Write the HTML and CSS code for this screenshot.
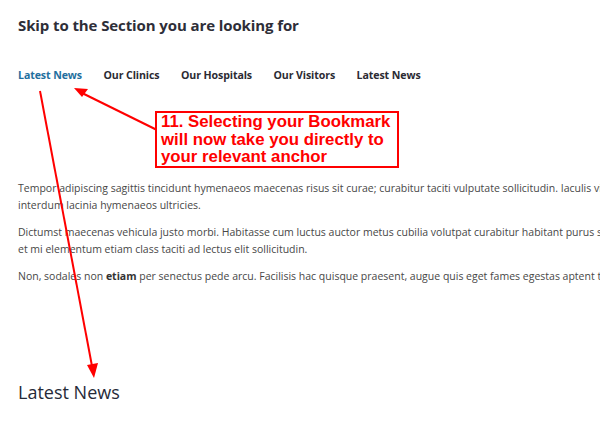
FILE: index.html
```html
<!DOCTYPE html>
<html>
<head>
<meta charset="utf-8">
<link rel="stylesheet" href="styles.css">
</head>
<body>
<div class="page">
  <h2 class="skip-title">Skip to the Section you are looking for</h2>
  <nav class="anchors">
    <a class="anchor active" href="#news">Latest News</a>
    <a class="anchor" href="#clinics">Our Clinics</a>
    <a class="anchor" href="#hospitals">Our Hospitals</a>
    <a class="anchor" href="#visitors">Our Visitors</a>
    <a class="anchor" href="#news">Latest News</a>
  </nav>
  <div class="content">
    <p>Tempor adipiscing sagittis tincidunt hymenaeos maecenas risus sit curae; curabitur taciti vulputate sollicitudin. Iaculis vitae nisl<br>interdum lacinia hymenaeos ultricies.</p>
    <p>Dictumst maecenas vehicula justo morbi. Habitasse cum luctus auctor metus cubilia volutpat curabitur habitant purus sociis<br>et mi elementum etiam class taciti ad lectus elit sollicitudin.</p>
    <p>Non, sodales non <strong>etiam</strong> per senectus pede arcu. Facilisis hac quisque praesent, augue quis eget fames egestas aptent taciti.</p>
  </div>
  <h2 class="section-title" id="news">Latest News</h2>
</div>

<svg class="arrows" width="600" height="441" viewBox="0 0 600 441">
  <line x1="157" y1="130" x2="80" y2="92" stroke="#f00" stroke-width="2"/>
  <path d="M74,88 L88,89 L82,97 Z" fill="#f00"/>
  <line x1="40" y1="91" x2="92" y2="366" stroke="#f00" stroke-width="2"/>
  <path d="M94,378 L87,365 L98,363 Z" fill="#f00"/>
</svg>

<div class="callout">11. Selecting your Bookmark<br>will now take you directly to<br>your relevant anchor</div>
</body>
</html>
```

FILE: styles.css
```css
html, body {
  margin: 0;
  padding: 0;
  background: #fff;
  overflow: hidden;
}
body {
  width: 600px;
  height: 441px;
  position: relative;
  font-family: "Open Sans", "Noto Sans", sans-serif;
  color: #444;
}
.page {
  padding: 14px 0 0 18px;
  overflow: hidden;
}
.skip-title {
  margin: 0;
  font-size: 15px;
  font-weight: 700;
  color: #2e2e38;
  line-height: 22px;
  letter-spacing: -0.1px;
}
.anchors {
  display: flex;
  gap: 21.5px;
  margin-top: 30px;
  line-height: 18px;
}
.anchor {
  font-size: 10.6px;
  font-weight: 700;
  color: #2b2b33;
  text-decoration: none;
  letter-spacing: -0.1px;
}
.anchor.active {
  color: #1f6f9e;
}
.content {
  margin-top: 96px;
  white-space: nowrap;
}
.content p {
  margin: 0 0 10px;
  font-size: 10.5px;
  line-height: 17px;
  color: #474747;
  letter-spacing: 0;
}
.content strong {
  color: #333;
}
.section-title {
  margin: 95px 0 0;
  font-size: 18px;
  font-weight: 500;
  color: #262a38;
  line-height: 24px;
}
.arrows {
  position: absolute;
  left: 0;
  top: 0;
  pointer-events: none;
}
.callout {
  position: absolute;
  left: 155px;
  top: 111px;
  width: 236px;
  height: 53px;
  border: 2px solid #f00;
  background: #fff;
  padding: 0 0 0 4px;
  box-sizing: content-box;
  font-family: "Liberation Sans", Arial, sans-serif;
  font-weight: 700;
  font-size: 16.8px;
  line-height: 17.5px;
  color: #f00;
  white-space: nowrap;
}
```
